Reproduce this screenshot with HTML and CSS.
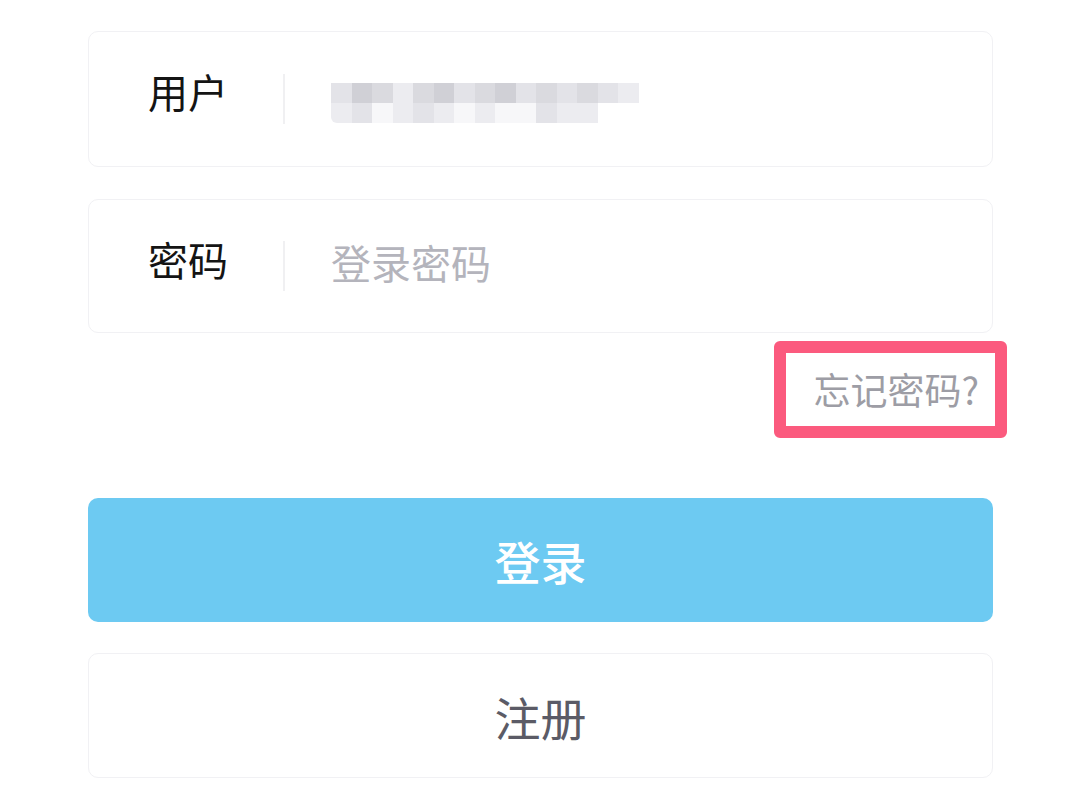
FILE: index.html
```html
<!DOCTYPE html>
<html lang="zh">
<head>
<meta charset="utf-8">
<title>登录</title>
<link rel="stylesheet" href="styles.css">
</head>
<body>
<div class="page">
  <div class="field field-user">
    <span class="label">用户</span>
    <span class="divider"></span>
    <div class="blur" aria-label="已隐藏的用户名">
      <div class="row">
        <i class="s2"></i><i class="s4"></i><i class="s3"></i><i class="s1"></i><i class="s3"></i><i class="s4"></i><i class="s2"></i><i class="s3"></i><i class="s4"></i><i class="s2"></i><i class="s3"></i><i class="s2"></i><i class="s3"></i><i class="s2"></i><i class="s1"></i>
      </div>
      <div class="row row-b">
        <i class="s1"></i><i class="s2"></i><i class="s0"></i><i class="s1"></i><i class="s2"></i><i class="s1"></i><i class="s0"></i><i class="s1"></i><i class="s0"></i><i class="s0"></i><i class="s2"></i><i class="s1"></i><i class="s1"></i>
      </div>
    </div>
  </div>
  <div class="field field-pass">
    <span class="label">密码</span>
    <span class="divider"></span>
    <span class="placeholder">登录密码</span>
  </div>
  <div class="forgot-row">
    <span class="forgot">忘记密码?</span>
  </div>
  <div class="btn btn-login">登录</div>
  <div class="btn btn-register">注册</div>
</div>
</body>
</html>
```

FILE: styles.css
```css
html, body {
  margin: 0;
  padding: 0;
  background: #ffffff;
}
body {
  font-family: "Noto Sans CJK SC", "Noto Sans", sans-serif;
  width: 1080px;
  height: 797px;
  overflow: hidden;
}
.page {
  padding: 31px 87px 0 88px;
  display: flex;
  flex-direction: column;
}
.field {
  box-sizing: border-box;
  border: 1px solid #f1f1f4;
  border-radius: 10px;
  display: flex;
  align-items: center;
  padding-left: 59px;
}
.field-user {
  height: 136px;
}
.field-pass {
  height: 134px;
  margin-top: 32px;
}
.label {
  font-size: 40px;
  color: #141414;
  line-height: 1;
  width: 76px;
  white-space: nowrap;
}
.field-user .label {
  margin-top: -16px;
}
.field-pass .label {
  margin-top: -14px;
}
.divider {
  width: 2px;
  height: 50px;
  background: #f0f0f2;
  margin-left: 59px;
  margin-right: 46px;
}
.blur {
  display: flex;
  flex-direction: column;
  margin-top: 7px;
}
.blur .row {
  display: flex;
  height: 20px;
}
.blur i {
  display: block;
  width: 20.5px;
  height: 20px;
}
.blur .row-b {
  border-bottom-left-radius: 6px;
  overflow: hidden;
}
.blur .s0 { background: #f7f7f9; }
.blur .s1 { background: #ececf0; }
.blur .s2 { background: #e3e3e8; }
.blur .s3 { background: #dadadf; }
.blur .s4 { background: #d0d0d6; }
.placeholder {
  font-size: 40px;
  line-height: 1;
  color: #b4b4bc;
  margin-top: -8px;
}
.forgot-row {
  display: flex;
  justify-content: flex-end;
  margin-top: 8px;
  margin-right: -14px;
}
.forgot {
  box-sizing: border-box;
  height: 97px;
  border: 12px solid #fb5a7e;
  border-radius: 6px;
  padding: 0 16px 0 27px;
  display: flex;
  align-items: center;
  font-size: 37px;
  color: #9d9da5;
  line-height: 1;
}
.btn {
  box-sizing: border-box;
  border-radius: 10px;
  display: flex;
  align-items: center;
  justify-content: center;
  font-size: 46px;
  line-height: 1;
}
.btn-login {
  margin-top: 60px;
  height: 124px;
  background: #6dcaf2;
  color: #ffffff;
  font-weight: 500;
}
.btn-register {
  margin-top: 31px;
  height: 125px;
  border: 1px solid #f1f1f4;
  color: #5b5b66;
}
```
